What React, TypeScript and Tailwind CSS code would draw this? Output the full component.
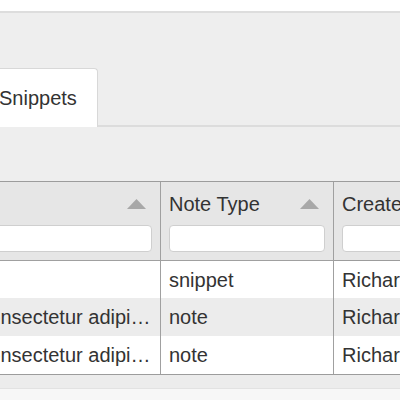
import React from "react";

const font = { fontFamily: '"Liberation Sans", Arial, sans-serif' };

function SortArrow() {
  return (
    <svg width="19" height="10" viewBox="0 0 19 10" className="mr-[6px] shrink-0">
      <path d="M9.5 0 L19 10 L0 10 Z" fill="#a8a8a8" />
    </svg>
  );
}

function HeaderCell({ title, last }: { title: string; last?: boolean }) {
  return (
    <div className={`bg-[#e6e6e6] px-2 pt-[10px] pb-2 ${last ? "" : "border-r border-[#a0a0a0]"}`}>
      <div className="flex h-6 items-center justify-between">
        <span className="truncate text-[#333]">{title}</span>
        {!last && <SortArrow />}
      </div>
      <input className="mt-[9px] block h-[27px] w-full rounded-[4px] border border-[#cfcfcf] bg-white outline-none" />
    </div>
  );
}

const rows = [
  { title: "", type: "snippet", by: "Richard" },
  { title: "Lorem ipsum dolor sit amet, consectetur adipiscing elit.", type: "note", by: "Richard" },
  { title: "Lorem ipsum dolor sit amet, consectetur adipiscing elit.", type: "note", by: "Richard" },
];

export default function App() {
  return (
    <div className="h-[400px] w-[400px] overflow-hidden bg-white text-[20px] text-[#333]" style={font}>
      <div className="h-[11px] bg-white" />

      {/* tabs */}
      <div className="bg-[#eeeeee] border-t-2 border-[#dddddd]">
        <div className="flex h-[114px] items-end border-b-2 border-[#dcdcdc]">
          <div className="-mb-[2px] ml-[-21px] flex h-[59px] items-center rounded-tr-[4px] border-t border-r border-[#d8d8d8] bg-white pl-5 pr-5">
            Snippets
          </div>
        </div>
        <div className="h-[54px]" />
      </div>

      {/* grid */}
      <div className="overflow-hidden border-t border-b border-[#9c9c9c] bg-[#eeeeee]">
        <div className="ml-[-281px] grid w-[815px] grid-cols-[442px_173px_200px]">
          <HeaderCell title="Title" />
          <HeaderCell title="Note Type" />
          <HeaderCell title="Created By" last />
          {rows.map((r, i) => (
            <React.Fragment key={i}>
              {[r.title, r.type, r.by].map((v, j) => (
                <div
                  key={j}
                  className={`flex h-[38px] items-center px-2 ${i === 0 ? "border-t border-[#9c9c9c]" : ""} ${
                    i % 2 === 1 ? "bg-[#ececec]" : "bg-white"
                  } ${j < 2 ? "border-r border-[#a0a0a0]" : ""}`}
                >
                  <span className="truncate">{v}</span>
                </div>
              ))}
            </React.Fragment>
          ))}
        </div>
      </div>

      <div className="h-[14px] border-b border-[#e2e2e2] bg-[#ececec]" />
      <div className="h-[20px] bg-[#f7f7f7]" />
    </div>
  );
}
